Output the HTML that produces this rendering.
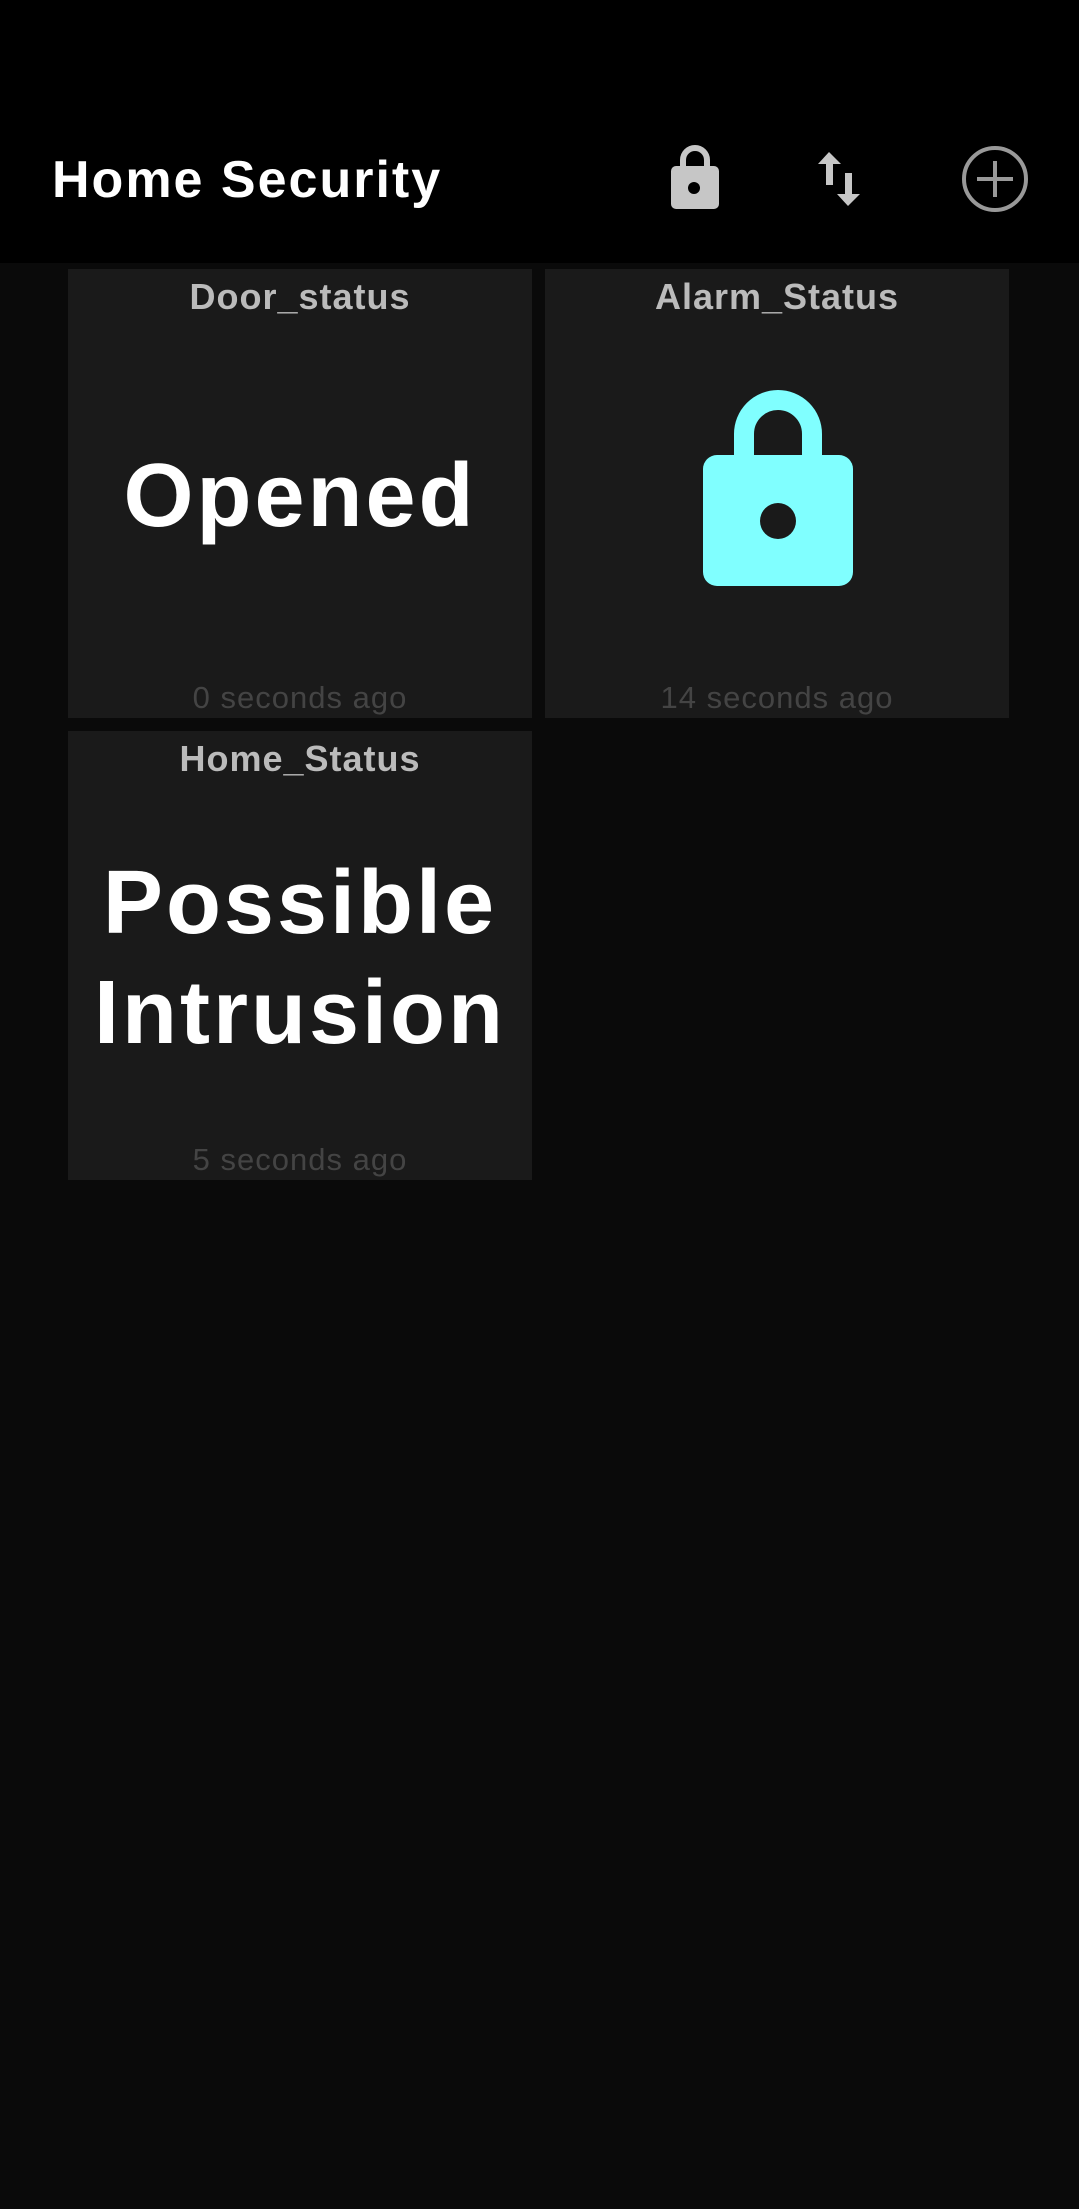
<!DOCTYPE html>
<html><head><meta charset="utf-8"><style>
*{margin:0;padding:0;box-sizing:border-box}
body{width:1079px;height:2209px;background:#0a0a0a;font-family:"Liberation Sans",sans-serif;position:relative;overflow:hidden}
.hdr{position:absolute;left:0;top:0;width:1079px;height:263px;background:#000}
.title{position:absolute;left:52px;top:150px;font-size:52px;font-weight:bold;color:#fff;letter-spacing:2px;line-height:60px}
.card{position:absolute;width:464px;height:449px;background:#1a1a1a}
.ct{position:absolute;left:0;right:0;top:6px;text-align:center;color:#bbb;font-size:36px;font-weight:bold;letter-spacing:1px;line-height:44px}
.cf{position:absolute;left:0;right:0;bottom:0;text-align:center;color:#444;font-size:31px;line-height:40px;letter-spacing:1px}
.big{position:absolute;left:0;right:0;text-align:center;color:#fff;font-weight:bold;font-size:90px;letter-spacing:3px}
</style></head><body>
<div class="hdr"></div>
<div class="title">Home Security</div>
<svg style="position:absolute;left:0;top:0" width="1079" height="263">
<path d="M683 168 V160 a12 12 0 0 1 24 0 V168" fill="none" stroke="#c6c6c6" stroke-width="6"/>
<rect x="671" y="166" width="48" height="43" rx="5" fill="#c6c6c6"/>
<circle cx="694" cy="188" r="6" fill="#000"/>
<path d="M829 152 L818 164 H826 V185 H833 V164 H841 Z" fill="#c6c6c6"/>
<path d="M848 206 L837 194 H845 V173 H852 V194 H860 Z" fill="#c6c6c6"/>
<circle cx="995" cy="179" r="31" fill="none" stroke="#999" stroke-width="4"/>
<path d="M977 179 H1013 M995 161 V197" stroke="#999" stroke-width="4"/>
</svg>
<div class="card" style="left:68px;top:269px">
<div class="ct">Door_status</div>
<div class="big" style="top:172px;line-height:110px">Opened</div>
<div class="cf">0 seconds ago</div>
</div>
<div class="card" style="left:545px;top:269px">
<div class="ct">Alarm_Status</div>
<svg style="position:absolute;left:0;top:0" width="464" height="449">
<path d="M199 195 V165 a34 34 0 0 1 68 0 V195" fill="none" stroke="#80ffff" stroke-width="20"/>
<rect x="158" y="186" width="150" height="131" rx="14" fill="#80ffff"/>
<circle cx="233" cy="252" r="18" fill="#1a1a1a"/>
</svg>
<div class="cf">14 seconds ago</div>
</div>
<div class="card" style="left:68px;top:731px">
<div class="ct">Home_Status</div>
<div class="big" style="top:117px;line-height:110px">Possible<br>Intrusion</div>
<div class="cf">5 seconds ago</div>
</div>
</body></html>
